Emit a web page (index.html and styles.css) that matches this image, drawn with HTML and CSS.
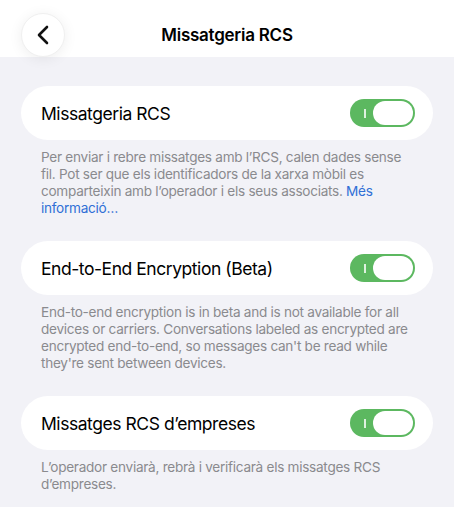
FILE: index.html
```html
<!DOCTYPE html>
<html lang="ca">
<head>
<meta charset="utf-8">
<link rel="stylesheet" href="styles.css">
</head>
<body>
<header class="topbar">
  <button class="back" aria-label="Enrere">
    <svg width="14" height="20" viewBox="0 0 14 20"><path d="M11 2 L3 10 L11 18" fill="none" stroke="#111" stroke-width="2.6" stroke-linecap="round" stroke-linejoin="round"/></svg>
  </button>
  <h1 class="title">Missatgeria RCS</h1>
</header>
<main class="content">
  <section class="group">
    <div class="card">
      <span class="label">Missatgeria RCS</span>
      <span class="switch"><span class="mark"></span><span class="knob"></span></span>
    </div>
    <p class="note">Per enviar i rebre missatges amb l’RCS, calen dades sense fil. Pot ser que els identificadors de la xarxa mòbil es comparteixin amb l’operador i els seus associats. <span class="link">Més informació…</span></p>
  </section>
  <section class="group">
    <div class="card">
      <span class="label">End-to-End Encryption (Beta)</span>
      <span class="switch"><span class="mark"></span><span class="knob"></span></span>
    </div>
    <p class="note">End-to-end encryption is in beta and is not available for all devices or carriers. Conversations labeled as encrypted are encrypted end-to-end, so messages can't be read while they're sent between devices.</p>
  </section>
  <section class="group">
    <div class="card">
      <span class="label">Missatges RCS d’empreses</span>
      <span class="switch"><span class="mark"></span><span class="knob"></span></span>
    </div>
    <p class="note">L’operador enviarà, rebrà i verificarà els missatges RCS d’empreses.</p>
  </section>
</main>
</body>
</html>
```
FILE: styles.css
```css
* { box-sizing: border-box; }
html, body { margin: 0; padding: 0; }
body {
  width: 454px;
  height: 507px;
  overflow: hidden;
  background: #f2f2f7;
  font-family: Inter, "Noto Sans", sans-serif;
  color: #000;
}
.topbar {
  height: 57px;
  background: #fff;
  display: flex;
  align-items: center;
  justify-content: center;
  position: relative;
}
.back {
  position: absolute;
  left: 21px;
  top: 13px;
  width: 44px;
  height: 44px;
  border-radius: 50%;
  border: 1px solid #f0f0f0;
  background: #fff;
  box-shadow: 0 2px 14px rgba(0,0,0,0.07);
  display: flex;
  align-items: center;
  justify-content: center;
  padding: 0;
}
.title {
  margin: 0;
  margin-top: 12px;
  font-size: 17px;
  font-weight: 600;
  letter-spacing: -0.25px;
}
.content {
  padding: 29px 21px 0;
  display: flex;
  flex-direction: column;
  gap: 24px;
}
.card {
  height: 54px;
  background: #fff;
  border-radius: 27px;
  display: flex;
  align-items: center;
  justify-content: space-between;
  padding: 0 18px 0 20px;
}
.label {
  font-size: 17.5px;
  letter-spacing: -0.45px;
}
.switch {
  width: 65px;
  height: 28px;
  border-radius: 14px;
  background: #5cb860;
  position: relative;
}
.mark {
  position: absolute;
  left: 14px;
  top: 10px;
  width: 1.5px;
  height: 9px;
  background: rgba(255,255,255,0.8);
}
.knob {
  position: absolute;
  right: 2px;
  top: 2px;
  width: 40px;
  height: 24px;
  border-radius: 12px;
  background: #fff;
}
.note {
  margin: 9px 0 0;
  padding: 0 20px;
  font-size: 13.6px;
  line-height: 17px;
  color: #8a8a8e;
  letter-spacing: -0.28px;
}
.link { color: #2f6fd6; }
```
